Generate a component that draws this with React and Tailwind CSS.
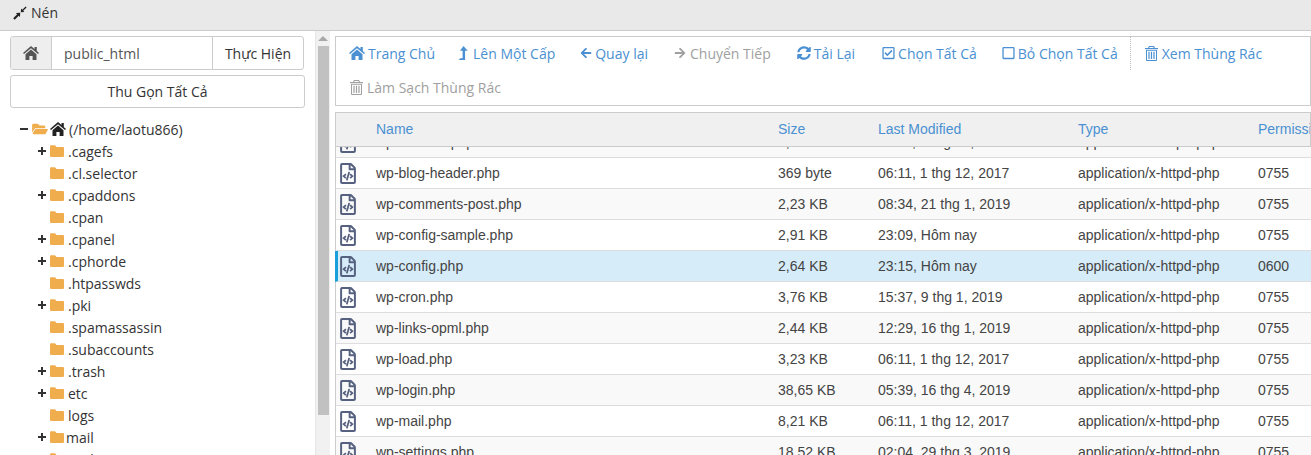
import React from "react";
import {
  FaFolderOpen,
  FaArrowLeft,
  FaArrowRight,
  FaSyncAlt,
  FaRegCheckSquare,
  FaRegSquare,
  FaRegFileCode,
} from "react-icons/fa";

const folders = [
  { name: ".cagefs", plus: true },
  { name: ".cl.selector" },
  { name: ".cpaddons", plus: true },
  { name: ".cpan" },
  { name: ".cpanel", plus: true },
  { name: ".cphorde", plus: true },
  { name: ".htpasswds" },
  { name: ".pki", plus: true },
  { name: ".spamassassin" },
  { name: ".subaccounts" },
  { name: ".trash", plus: true },
  { name: "etc", plus: true },
  { name: "logs" },
  { name: "mail", plus: true, tight: true },
  { name: "perl5" },
];

const files = [
  ["wp-activate.php", "6,78 KB", "06:11, 1 thg 12, 2017", "0755"],
  ["wp-blog-header.php", "369 byte", "06:11, 1 thg 12, 2017", "0755"],
  ["wp-comments-post.php", "2,23 KB", "08:34, 21 thg 1, 2019", "0755"],
  ["wp-config-sample.php", "2,91 KB", "23:09, Hôm nay", "0755"],
  ["wp-config.php", "2,64 KB", "23:15, Hôm nay", "0600"],
  ["wp-cron.php", "3,76 KB", "15:37, 9 thg 1, 2019", "0755"],
  ["wp-links-opml.php", "2,44 KB", "12:29, 16 thg 1, 2019", "0755"],
  ["wp-load.php", "3,23 KB", "06:11, 1 thg 12, 2017", "0755"],
  ["wp-login.php", "38,65 KB", "05:39, 16 thg 4, 2019", "0755"],
  ["wp-mail.php", "8,21 KB", "06:11, 1 thg 12, 2017", "0755"],
  ["wp-settings.php", "18,52 KB", "02:04, 29 thg 3, 2019", "0755"],
];

function CompressIcon() {
  return (
    <svg viewBox="0 0 14 14" className="w-[14px] h-[14px] text-[#222]" fill="currentColor">
      <path d="M0.2 12.3 L4.2 8.3 L2.9 7 L7.2 6.8 L7 11.1 L5.7 9.8 L1.7 13.8 Z" />
      <path d="M7.8 6.2 L8.1 2.6 L9.3 3.8 L12.6 0.4 L13.6 1.4 L10.2 4.7 L11.4 5.9 Z" />
    </svg>
  );
}

function LevelUpIcon() {
  return (
    <svg viewBox="0 0 10 16" className="w-[10px] h-[15px]" fill="currentColor">
      <path d="M5.5 0 L10 5 L7.2 5 L7.2 15 L0.5 15 L2 13 L4.6 13 L4.6 5 L1.8 5 Z" />
    </svg>
  );
}

function HomeIcon({ className }) {
  return (
    <svg viewBox="0 0 16 14" className={className} fill="currentColor">
      <path d="M8 0 L11.5 3 V1 H13.8 V5 L16 7 L15 8.1 L8 2.2 L1 8.1 L0 7 Z" />
      <path d="M2.5 8.3 L8 3.6 L13.5 8.3 V13.4 Q13.5 14 13 14 H9.6 V10 H6.4 V14 H3 Q2.5 14 2.5 13.4 Z" />
    </svg>
  );
}

function TrashIcon() {
  return (
    <svg viewBox="0 0 13 15" className="w-[13px] h-[15px]" fill="currentColor">
      <path d="M4 0 H9 L10 2 H13 V3.2 H0 V2 H3 Z M4.6 1 L4.2 2 H8.8 L8.4 1 Z" />
      <path d="M1 4 H12 V14 Q12 15 11 15 H2 Q1 15 1 14 Z M2 4.8 V13.6 Q2 14.1 2.5 14.1 H10.5 Q11 14.1 11 13.6 V4.8 Z" />
      <path d="M3.4 5.8 H4.6 V13 H3.4 Z M5.9 5.8 H7.1 V13 H5.9 Z M8.4 5.8 H9.6 V13 H8.4 Z" />
    </svg>
  );
}

function FolderIcon() {
  return (
    <svg viewBox="0 0 14 12" className="w-[14px] h-[12px] text-[#f0ad4e] shrink-0" fill="currentColor">
      <path d="M1 0.3 H5 L6.5 1.9 H13 Q14 1.9 14 2.9 V11 Q14 12 13 12 H1 Q0 12 0 11 V1.3 Q0 0.3 1 0.3 Z" />
    </svg>
  );
}

function PlusIcon() {
  return (
    <svg viewBox="0 0 8 8" className="w-[8px] h-[8px] text-[#333]" fill="currentColor">
      <path d="M3 0 H5 V3 H8 V5 H5 V8 H3 V5 H0 V3 H3 Z" />
    </svg>
  );
}

function ToolItem({ icon, label, muted, gap = "gap-[3px]", className = "" }) {
  return (
    <span
      className={`flex items-center h-[34px] whitespace-nowrap ${gap} ${
        muted ? "text-[#a0a0a0]" : "text-[#4a90d2]"
      } ${className}`}
    >
      {icon}
      {label}
    </span>
  );
}

function FileRow({ file, index }) {
  const selected = file[0] === "wp-config.php";
  let bg = index % 2 === 0 ? "bg-[#f9f9f9]" : "bg-white";
  if (selected) bg = "bg-[#d6ecf9]";
  return (
    <div
      className={`grid items-center h-[31px] border-b border-[#dddddd] text-[14px] text-[#444] whitespace-nowrap ${bg} ${
        selected
          ? "grid-cols-[38px_402px_100px_200px_180px_1fr] border-l-[3px] border-l-[#1b9fdb]"
          : "grid-cols-[40px_402px_100px_200px_180px_1fr] border-l border-l-[#cccccc]"
      }`}
    >
      <span className={selected ? "pl-[2px]" : "pl-[4px]"}>
        <FaRegFileCode className="w-[16px] h-[21px] text-[#56617f]" />
      </span>
      <span>{file[0]}</span>
      <span>{file[1]}</span>
      <span>{file[2]}</span>
      <span>application/x-httpd-php</span>
      <span>{file[3]}</span>
    </div>
  );
}

export default function App() {
  return (
    <div className="h-[455px] w-[1311px] overflow-hidden bg-white font-['Open_Sans',sans-serif] text-[14px] text-[#333]">
      <div className="h-[31px] bg-[#e9e9e9] border-b border-[#c8ccce] flex items-center gap-[4px] pl-[13px] pb-[5px]">
        <CompressIcon />
        <span>Nén</span>
      </div>

      <div className="flex h-[424px]">
        <aside className="w-[315px] shrink-0 pt-[5px] pl-[10px] pr-[10px] overflow-hidden">
          <div className="flex h-[34px] w-[294px] border border-[#cccccc] rounded-[3px] overflow-hidden">
            <span className="w-[41px] bg-[#eeeeee] border-r border-[#cccccc] flex items-center justify-center text-[#555]">
              <HomeIcon className="w-[16px] h-[14px]" />
            </span>
            <span className="w-[160px] flex items-center pl-[12px] text-[#555]">public_html</span>
            <span className="flex-1 border-l border-[#cccccc] flex items-center justify-center">
              Thực Hiện
            </span>
          </div>
          <div className="mt-[5px] h-[33px] w-[295px] border border-[#cccccc] rounded-[3px] flex items-center justify-center">
            Thu Gọn Tất Cả
          </div>
          <div className="mt-[10px] pl-[10px]">
            <div className="flex items-center h-[22px]">
              <span className="w-[8px] h-[2px] bg-[#333]" />
              <FaFolderOpen className="ml-[4px] w-[16px] h-[14px] text-[#f0ad4e]" />
              <HomeIcon className="ml-[2px] w-[16px] h-[14px] text-[#222]" />
              <span className="ml-[3px]">(/home/laotu866)</span>
            </div>
            {folders.map((f) => (
              <div key={f.name} className="flex items-center h-[22px] pl-[18px]">
                <span className="w-[12px] shrink-0">{f.plus && <PlusIcon />}</span>
                <FolderIcon />
                <span className={f.tight ? "ml-[2px]" : "ml-[4px]"}>{f.name}</span>
              </div>
            ))}
          </div>
        </aside>

        <div className="w-[15px] shrink-0 bg-[#f1f1f1] border-l border-[#e6e6e6] flex flex-col items-center">
          <span className="mt-[5px] w-0 h-0 border-x-[5px] border-x-transparent border-b-[5px] border-b-[#a8a8a8]" />
          <span className="mt-[5px] w-[11px] h-[369px] bg-[#c1c1c1]" />
        </div>

        <main className="flex-1 min-w-0 pl-[5px]">
          <div className="mt-[5px] h-[70px] border border-[#cccccc] pl-[13px] pr-[8px] flex flex-col text-[14px]">
            <div className="-mt-px flex items-center gap-[25px]">
              <ToolItem icon={<HomeIcon className="w-[16px] h-[14px]" />} label="Trang Chủ" />
              <ToolItem icon={<LevelUpIcon />} label="Lên Một Cấp" gap="gap-[5px]" className="-ml-[2px]" />
              <ToolItem icon={<FaArrowLeft className="w-[12px] h-[12px]" />} label="Quay lại" />
              <ToolItem muted icon={<FaArrowRight className="w-[12px] h-[12px]" />} label="Chuyển Tiếp" gap="gap-[4px]" className="ml-[1px]" />
              <ToolItem icon={<FaSyncAlt className="w-[14px] h-[14px]" />} label="Tải Lại" className="ml-[1px]" />
              <ToolItem icon={<FaRegCheckSquare className="w-[13px] h-[14px]" />} label="Chọn Tất Cả" className="ml-[2px]" />
              <ToolItem icon={<FaRegSquare className="w-[13px] h-[14px]" />} label="Bỏ Chọn Tất Cả" />
              <span className="h-[34px] -ml-[13px] -mr-[11px] border-l border-dotted border-[#bbbbbb]" />
              <ToolItem icon={<TrashIcon />} label="Xem Thùng Rác" gap="gap-[4px]" />
            </div>
            <ToolItem muted icon={<TrashIcon />} label="Làm Sạch Thùng Rác" gap="gap-[4px]" className="pl-px" />
          </div>

          <div className="mt-[6px] font-['Liberation_Sans',Arial,sans-serif]">
            <div className="grid grid-cols-[40px_402px_100px_200px_180px_1fr] items-center h-[35px] bg-[#f0f0f0] border border-[#cccccc] text-[14px] text-[#4a90d2] whitespace-nowrap overflow-hidden">
              <span />
              <span>Name</span>
              <span>Size</span>
              <span>Last Modified</span>
              <span>Type</span>
              <span>Permission</span>
            </div>
            <div className="h-[309px] overflow-hidden">
              <div className="-mt-[20px]">
                {files.map((file, i) => (
                  <FileRow key={file[0]} file={file} index={i} />
                ))}
              </div>
            </div>
          </div>
        </main>
      </div>
    </div>
  );
}
